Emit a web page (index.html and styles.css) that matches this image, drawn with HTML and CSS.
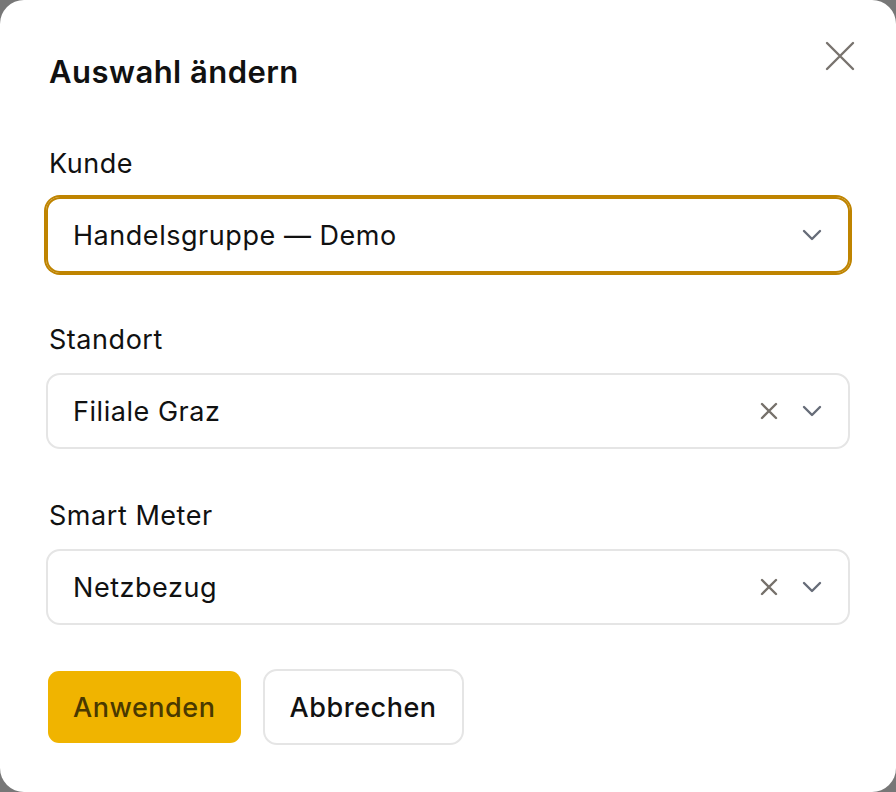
FILE: index.html
```html
<!DOCTYPE html>
<html lang="de">
<head>
    <meta charset="UTF-8">
    <meta name="viewport" content="width=device-width, initial-scale=1.0">
    <title>Auswahl ändern</title>
    <link rel="stylesheet" href="styles.css">
</head>
<body>

    <div class="modal">
        <button class="close-btn" aria-label="Schließen">
            <svg width="32" height="32" viewBox="0 0 32 32" fill="none" stroke="currentColor" stroke-width="2.4" stroke-linecap="round">
                <path d="M3 3 L29 29 M29 3 L3 29"/>
            </svg>
        </button>

        <h2>Auswahl ändern</h2>

        <div class="field">
            <label>Kunde</label>
            <div class="select focused">
                <span class="value">Handelsgruppe — Demo</span>
                <span class="chevron">
                    <svg width="20" height="12" viewBox="0 0 20 12" fill="none" stroke="currentColor" stroke-width="2.4" stroke-linecap="round" stroke-linejoin="round"><path d="M2 2 L10 10 L18 2"/></svg>
                </span>
            </div>
        </div>

        <div class="field">
            <label>Standort</label>
            <div class="select">
                <span class="value">Filiale Graz</span>
                <span class="clear">
                    <svg width="18" height="18" viewBox="0 0 18 18" fill="none" stroke="currentColor" stroke-width="2.4" stroke-linecap="round"><path d="M2 2 L16 16 M16 2 L2 16"/></svg>
                </span>
                <span class="chevron">
                    <svg width="20" height="12" viewBox="0 0 20 12" fill="none" stroke="currentColor" stroke-width="2.4" stroke-linecap="round" stroke-linejoin="round"><path d="M2 2 L10 10 L18 2"/></svg>
                </span>
            </div>
        </div>

        <div class="field">
            <label>Smart Meter</label>
            <div class="select">
                <span class="value">Netzbezug</span>
                <span class="clear">
                    <svg width="18" height="18" viewBox="0 0 18 18" fill="none" stroke="currentColor" stroke-width="2.4" stroke-linecap="round"><path d="M2 2 L16 16 M16 2 L2 16"/></svg>
                </span>
                <span class="chevron">
                    <svg width="20" height="12" viewBox="0 0 20 12" fill="none" stroke="currentColor" stroke-width="2.4" stroke-linecap="round" stroke-linejoin="round"><path d="M2 2 L10 10 L18 2"/></svg>
                </span>
            </div>
        </div>

        <div class="actions">
            <button class="btn btn-primary">Anwenden</button>
            <button class="btn btn-secondary">Abbrechen</button>
        </div>
    </div>

</body>
</html>
```

FILE: styles.css
```css
html, body {
    margin: 0;
    height: 100%;
}
body {
    font-family: 'Inter', 'Noto Sans', sans-serif;
    background-color: #777777;
    color: #111111;
}
.modal {
    position: relative;
    box-sizing: border-box;
    width: 896px;
    height: 792px;
    background: white;
    border-radius: 24px;
    padding: 52px 46px 0 46px;
}
.close-btn {
    position: absolute;
    top: 40px;
    right: 40px;
    width: 32px;
    height: 32px;
    padding: 0;
    border: none;
    background: none;
    color: #78736e;
    cursor: pointer;
}
.close-btn svg {
    display: block;
}
h2 {
    margin: 0 0 0 3px;
    font-size: 31px;
    line-height: 40px;
    font-weight: 600;
    letter-spacing: 0.015em;
}
.field {
    margin-top: 56px;
}
.field + .field {
    margin-top: 51px;
}
label {
    display: block;
    margin: 0 0 17px 3px;
    font-size: 27px;
    line-height: 32px;
    letter-spacing: 0.02em;
}
.select {
    box-sizing: border-box;
    height: 76px;
    display: flex;
    align-items: center;
    gap: 24px;
    padding: 0 26px 0 25px;
    border: 2px solid #e5e5e5;
    border-radius: 14px;
    font-size: 27px;
    letter-spacing: 0.02em;
}
.select.focused {
    border-color: #bf8400;
    box-shadow: 0 0 0 2px #bf8400;
}
.value {
    flex: 1;
}
.clear {
    color: #76716b;
    display: flex;
}
.chevron {
    color: #666c78;
    display: flex;
}
.actions {
    display: flex;
    gap: 20px;
    margin-top: 44px;
}
.btn {
    box-sizing: border-box;
    height: 76px;
    padding: 0 25px;
    font-family: inherit;
    font-size: 27px;
    font-weight: 500;
    letter-spacing: 0.02em;
    border-radius: 14px;
    cursor: pointer;
}
.btn-primary {
    border: 2px solid transparent;
    background-clip: padding-box;
    background-color: #f0b400;
    color: #4a3900;
    border-radius: 13px;
}
.btn-secondary {
    border: 2px solid #e5e5e5;
    background: white;
    color: #111111;
}
```
